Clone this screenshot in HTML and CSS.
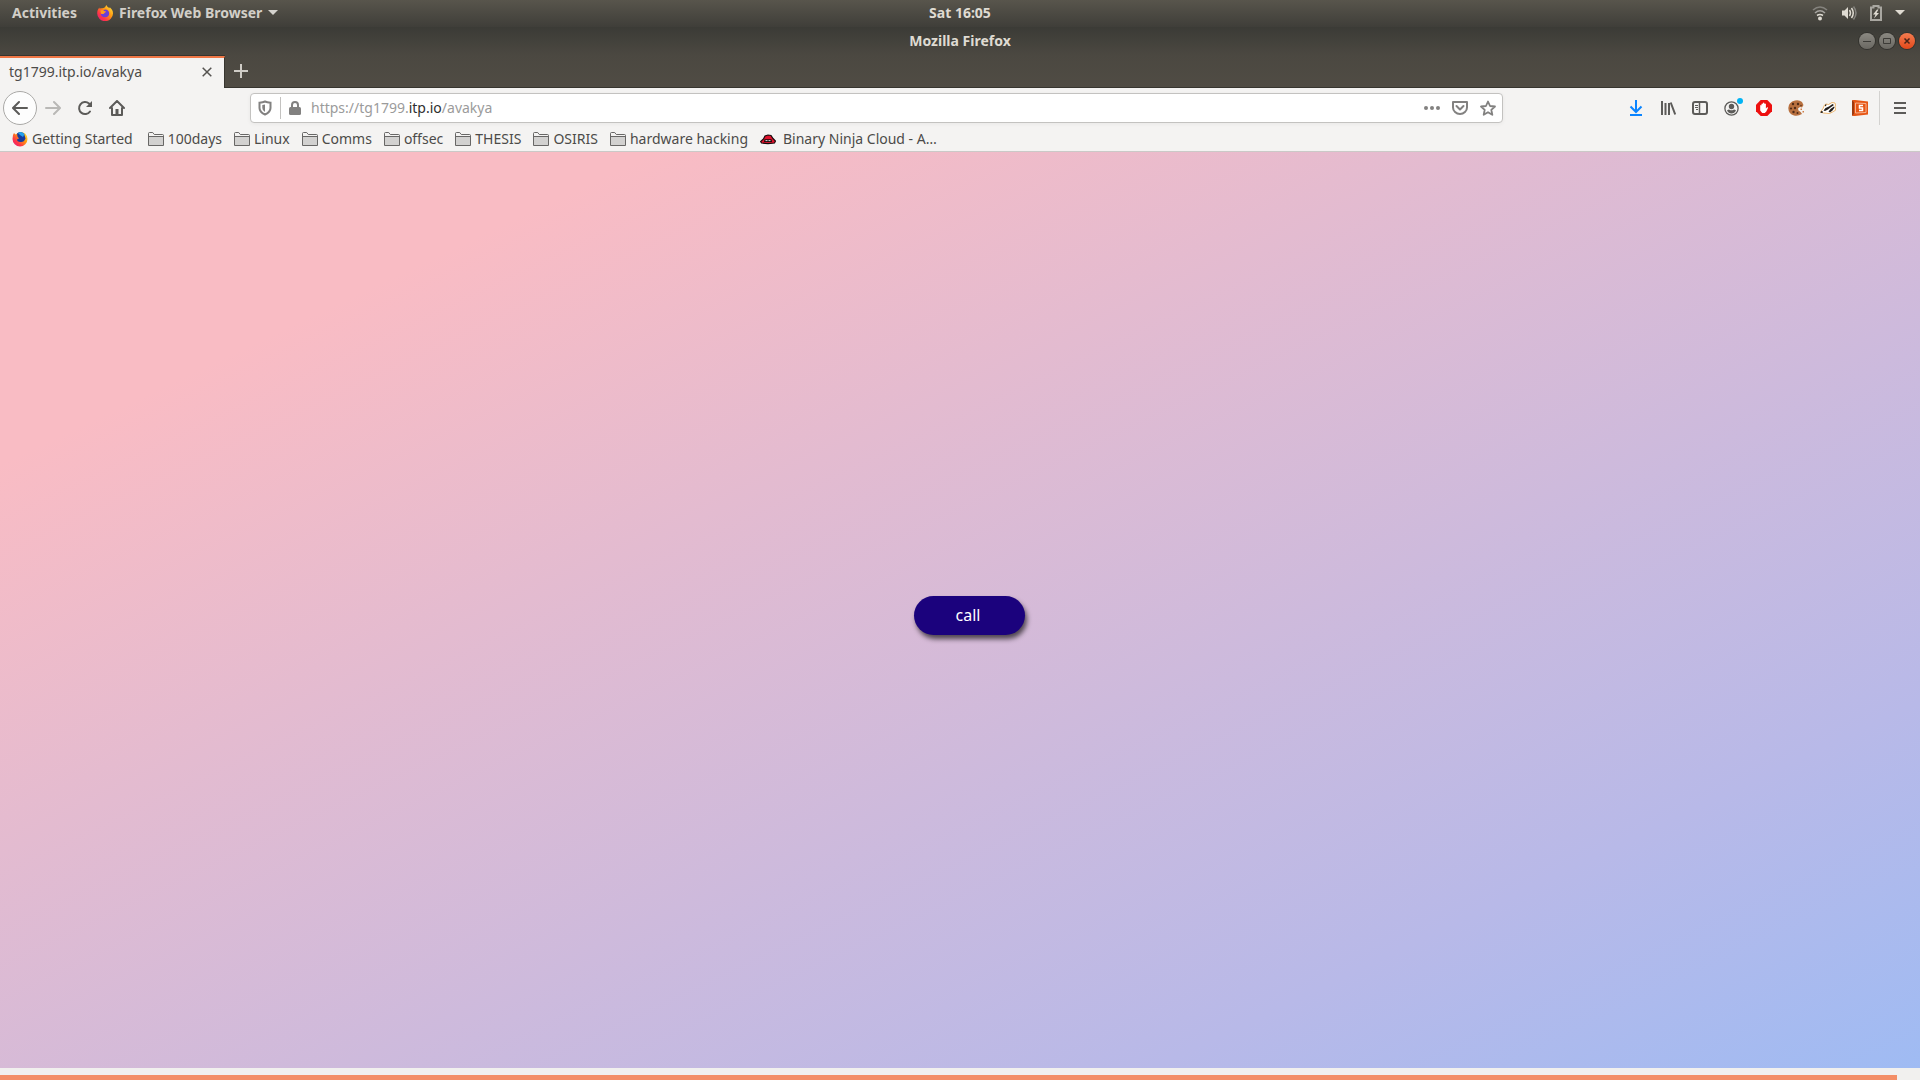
FILE: index.html
```html
<!DOCTYPE html>
<html lang="en">
<head>
<meta charset="utf-8">
<title>Mozilla Firefox</title>
<link rel="stylesheet" href="styles.css">
</head>
<body>
<svg class="defs" aria-hidden="true">
  <defs>
    <linearGradient id="flame" x1="1" y1="0" x2="0" y2="1">
      <stop offset="0" stop-color="#fff04a"/><stop offset=".4" stop-color="#ff980e"/><stop offset=".7" stop-color="#ff3647"/><stop offset="1" stop-color="#e31587"/>
    </linearGradient>
    <symbol id="folder" viewBox="0 0 16 16">
      <path d="M.5 14.500V2.500q0-1 1-1h3.200l1.600 2h8.200q1 0 1 1v10z" fill="#d2d1d0" stroke="#686766"/>
      <path d="M1 2h3.500l1.600 2H15v1.500H1z" fill="#f4f3f2"/><path d="M1 5.500h14" stroke="#686766"/>
    </symbol>
  </defs>
</svg>
<header class="topbar">
  <div class="topbar-side">
    <button class="menu">Activities</button>
    <button class="menu app-menu">
      <svg width="16" height="16" viewBox="0 0 16 16"><path d="M8 2.2 9.3 0c1 2 2 2 3 3.300l.5-1c1.600 1.400 3.200 3.200 3.200 6A7.800 7.700 0 0 1 .2 8.500C.2 6 1 4 2.400 2.600l.2 1.200C4 2.800 6 3.600 8 2.200z" fill="url(#flame)"/><path d="M8 4.500c3 0 4.200 2 4.200 4S10.600 12.300 8 12.300 3.800 10.500 3.800 8.500c1 .6 2 .4 3-.3-2.300-.8-1-2.700 1.200-3.700z" fill="#6b3fd6"/><path d="M3.500 5.500C5 4.500 6 5 7 6l2 .5c0 1-1.500 1-2 2-1 1-2.500.5-3 0z" fill="#ff9a1f"/></svg>
      <span>Firefox Web Browser</span>
      <svg width="10" height="6" viewBox="0 0 10 6"><path d="M0 0h10L5 5z" fill="#d5d3ce"/></svg>
    </button>
  </div>
  <time class="clock">Sat 16:05</time>
  <div class="topbar-side topbar-status">
    <svg width="16" height="16" viewBox="0 0 16 16" fill="none"><path d="M1 5q7-6 14 0" stroke="#85837e" stroke-width="1.600"/><path d="M3 8q5-4.500 10 0" stroke="#a5a39e" stroke-width="1.600"/><path d="M5 10.500q3-2 6 0" stroke="#dfdbd2" stroke-width="1.600"/><circle cx="8" cy="13.500" r="2" fill="#dfdbd2"/></svg>
    <svg width="16" height="16" viewBox="0 0 16 16" fill="none"><path d="M1 5.500h2.500L7 2v12l-3.500-3.500H1z" fill="#dfdbd2"/><path d="M8.500 5q2 3 0 6M10.500 3q3.500 5 0 10" stroke="#dfdbd2" stroke-width="1.500"/><path d="M12.500 1.500q5 6.500 0 13" stroke="#85837e" stroke-width="1.500"/></svg>
    <svg width="12" height="16" viewBox="0 0 12 16"><path d="M1 2.500h2.500V1h5v1.500H11V15H1z" fill="none" stroke="#a9a7a1" stroke-width="2"/><path d="M7 4.500 3 9.500h2.500L4 13.500l5-5.500H6.500l2-3.500z" fill="#dfdbd2"/></svg>
    <svg width="10" height="6" viewBox="0 0 10 6"><path d="M0 0h10L5 5z" fill="#dfdbd2"/></svg>
  </div>
</header>
<div class="titlebar">
  <span></span>
  <h1 class="title">Mozilla Firefox</h1>
  <div class="window-buttons">
    <button class="window-button" aria-label="Minimize"><svg width="16" height="16" viewBox="0 0 16 16"><path d="M4 8.500h8" stroke="#3c3b37"/></svg></button>
    <button class="window-button" aria-label="Maximize"><svg width="16" height="16" viewBox="0 0 16 16"><path d="M4.500 5.500h7v5h-7z" fill="none" stroke="#3c3b37"/></svg></button>
    <button class="window-button close" aria-label="Close"><svg width="16" height="16" viewBox="0 0 16 16"><path d="m5.500 5.500 5 5m0-5-5 5" stroke="#4a2418" stroke-width="1.500"/></svg></button>
  </div>
</div>
<div class="tabs">
  <div class="tab"><span>tg1799.itp.io/avakya</span>
    <button class="icon-button" aria-label="Close tab"><svg width="10" height="10" viewBox="0 0 10 10"><path d="m.7.7 8.600 8.600m0-8.600L.7 9.300" stroke="#555350" stroke-width="1.500"/></svg></button>
  </div>
  <button class="icon-button new-tab" aria-label="New tab"><svg width="14" height="14" viewBox="0 0 14 14"><path d="M7 0v14M0 7h14" stroke="#cfccc6" stroke-width="2"/></svg></button>
</div>
<nav class="toolbar">
  <div class="nav-buttons">
    <button class="icon-button back" aria-label="Back"><svg width="16" height="16" viewBox="0 0 16 16" fill="none" stroke="#5c5b59" stroke-width="2" stroke-linecap="round" stroke-linejoin="round"><path d="M15 8H1.500M7 2 1 8l6 6"/></svg></button>
    <button class="icon-button" aria-label="Forward"><svg width="16" height="16" viewBox="0 0 16 16" fill="none" stroke="#b9b8b6" stroke-width="2" stroke-linecap="round" stroke-linejoin="round"><path d="M1 8h13.500M9 2l6 6-6 6"/></svg></button>
    <button class="icon-button" aria-label="Reload"><svg width="16" height="16" viewBox="0 0 16 16" fill="none" stroke="#5c5b59" stroke-width="2" stroke-linecap="round"><path d="M13 11.500A6 6 0 1 1 12 3.500l1.500 1.500"/><path d="M15 1v6H9z" fill="#5c5b59" stroke="none"/></svg></button>
    <button class="icon-button" aria-label="Home"><svg width="16" height="16" viewBox="0 0 16 16" fill="none" stroke="#5c5b59" stroke-width="2" stroke-linecap="round" stroke-linejoin="round"><path d="m1 8 7-7 7 7M3 8v7h10V8"/><path d="M6.500 15V9h3v6z" fill="#5c5b59" stroke="none"/></svg></button>
  </div>
  <div class="urlbar">
    <svg width="14" height="16" viewBox="0 0 14 16"><path d="M7 1.500Q9 2.500 12.500 2.700V8q0 4-5.500 6.500Q1.500 12 1.500 8V2.700Q5 2.500 7 1.500z" fill="none" stroke="#828180" stroke-width="2"/><path d="M7 4.500V12Q4.300 10.500 4.300 8V5z" fill="#828180"/></svg>
    <span class="separator"></span>
    <svg width="12" height="16" viewBox="0 0 12 16"><rect y="7" width="12" height="8" rx="1.500" fill="#828180"/><path d="M3 8V5a3 3 0 0 1 6 0v3" fill="none" stroke="#828180" stroke-width="2"/></svg>
    <div class="address" role="textbox" aria-label="Address" contenteditable="true" spellcheck="false">https://tg1799.<span class="domain">itp.io</span>/avakya</div>
    <svg width="16" height="16" viewBox="0 0 16 16" fill="#828180"><circle cx="2" cy="8" r="2"/><circle cx="8" cy="8" r="2"/><circle cx="14" cy="8" r="2"/></svg>
    <svg width="16" height="16" viewBox="0 0 16 16" fill="none" stroke="#828180" stroke-width="2" stroke-linejoin="round"><path d="M1 2h14v5.500a7 6.500 0 0 1-14 0z"/><path d="m4.500 6 3.500 3.500L11.500 6" stroke-linecap="round"/></svg>
    <svg width="16" height="16" viewBox="0 0 16 16"><path d="m8 1.500 2 4.500 5 .5-3.700 3.300 1 5L8 12.200l-4.300 2.600 1-5L1 6.500 6 6z" fill="none" stroke="#828180" stroke-width="1.800" stroke-linejoin="round"/></svg>
  </div>
  <div class="tools">
    <button class="icon-button" aria-label="Downloads"><svg width="14" height="16" viewBox="0 0 14 16" fill="none" stroke="#0a84ff" stroke-width="2"><path d="M7 0v12M1.500 6.500 7 12l5.500-5.500M1 15h12" /></svg></button>
    <button class="icon-button" aria-label="Library"><svg width="16" height="16" viewBox="0 0 16 16" stroke="#5c5b59" stroke-width="2"><path d="M2 1v14M5.500 3v12M9 3v12M10.700 2.500l4.500 12"/></svg></button>
    <button class="icon-button" aria-label="Sidebars"><svg width="16" height="16" viewBox="0 0 16 16" fill="none" stroke="#5c5b59"><rect x="1" y="2" width="14" height="12" rx="2" stroke-width="2"/><path d="M7.500 2v12" stroke-width="1.500"/><path d="M3 5.500h3M3 7.500h3M4 9.500h2"/></svg></button>
    <button class="icon-button account" aria-label="Account"><svg width="16" height="16" viewBox="0 0 16 16"><circle cx="7.500" cy="8.500" r="6.600" fill="none" stroke="#5c5b59" stroke-width="1.300"/><circle cx="7.500" cy="6.500" r="2.700" fill="#5c5b59"/><path d="M3 10.500q1.500-1.300 2.500-.8 2 1 4 0 1-.5 2.500.8-1.500 3-4.500 3t-4.500-3z" fill="#5c5b59"/></svg><span class="badge"></span></button>
    <button class="icon-button" aria-label="Ad blocker"><svg width="16" height="16" viewBox="0 0 16 16"><path d="M4.700 0h6.600L16 4.700v6.600L11.300 16H4.700L0 11.300V4.700z" fill="#ed1010"/><path d="M4.200 5.500q.7-1 1.300 0V4q.7-1.200 1.400 0V3q.8-1 1.500 0v1q.8-1 1.500 0v4.500l1.200-1.300q1-.2 1 .6l-1.800 3.700-1.500 1.500H6.200l-2-2.500z" fill="#fff"/></svg></button>
    <button class="icon-button" aria-label="Cookies"><svg width="16" height="16" viewBox="0 0 16 16"><path d="M7 .5q4-1 7 1.500l1.500 3-1.500 2.500-2-.5-2 1.500.5 2 1.500 1 1 1 1 1.500Q10 16.500 6 15.500.5 14 .3 8 .5 2 7 .5z" fill="#b8703f"/><g fill="#4f2a18"><circle cx="5" cy="4" r="1.200"/><circle cx="10" cy="4" r="1.200"/><circle cx="3" cy="8.500" r="1.100"/><circle cx="7" cy="8" r="1.200"/><circle cx="5.500" cy="12" r="1.200"/><circle cx="9.500" cy="13" r="1"/><circle cx="13" cy="5.500" r=".7"/></g><path d="M12.500 8.500h1.500v1.500h-1.500zM14.500 11H16v1.500h-1.500z" fill="#d07e48"/></svg></button>
    <button class="icon-button" aria-label="Privacy Badger"><svg width="16" height="16" viewBox="0 0 16 16"><path d="M.5 12 3 8.500 4.500 5 6 4l2.500.5L12 2.500l3 .5.500 2-.5 2 .8 3-3.300 2-3 1.500-6-.5z" fill="#fff" stroke="#e9a54c" stroke-width=".8"/><path d="M.3 12.800 1.300 11l1.700.5-.5 1.500zM3.500 10.500 5.500 8 9 6.500 12.500 4l1.500 1-3.500 2.500L8 9.500l-3 1.500zM8.500 11.500l2-2.500 3.500-2.500.5 1-2 3-2.500 2zM5 4.500l2 .3L5 6.500z" fill="#211d1b"/></svg></button>
    <button class="icon-button" aria-label="S5 extension"><svg width="16" height="16" viewBox="0 0 16 16"><path d="M0 0 3 2v12l-3 2z" fill="#9c3a10"/><path d="M0 0h3l13 1.500v13L3 16H0l2-2V2z" fill="#e65514"/><path d="M3.500 3 14 3.500v9L3.500 13z" fill="none" stroke="#f7b391"/><path d="M11 5.500H7.500V8h3v2.500H7" fill="none" stroke="#fff" stroke-width="1.500"/></svg></button>
  </div>
  <button class="icon-button app-button" aria-label="Open menu"><svg width="12" height="14" viewBox="0 0 12 14"><path d="M0 2h12M0 7h12M0 12h12" stroke="#5c5b59" stroke-width="2"/></svg></button>
</nav>
<nav class="bookmarks" aria-label="Bookmarks">
  <a href="#" class="home-link"><svg width="16" height="16" viewBox="0 0 16 16"><path d="M8 1q7 0 7.500 7A7.500 7.500 0 0 1 .5 8L1 4l1-2 1.500 1.500z" fill="url(#flame)"/><path d="M5 2.500Q8-.5 12 2.500l1.500 5Q12 11.500 8.500 11T5 8.500l2-1-1.500-2z" fill="#173b9c"/><path d="M6 2q3-2.500 6.500 1L11 6 8 4z" fill="#24a1ee"/></svg>Getting Started</a>
  <a href="#"><svg width="16" height="16"><use href="#folder"/></svg>100days</a>
  <a href="#"><svg width="16" height="16"><use href="#folder"/></svg>Linux</a>
  <a href="#"><svg width="16" height="16"><use href="#folder"/></svg>Comms</a>
  <a href="#"><svg width="16" height="16"><use href="#folder"/></svg>offsec</a>
  <a href="#"><svg width="16" height="16"><use href="#folder"/></svg>THESIS</a>
  <a href="#"><svg width="16" height="16"><use href="#folder"/></svg>OSIRIS</a>
  <a href="#"><svg width="16" height="16"><use href="#folder"/></svg>hardware hacking</a>
  <a href="#" class="ninja"><svg width="16" height="16" viewBox="0 0 16 16"><path d="M.7 10.500 3.500 8 5 5l3-1 3 .5 2 3 2.500 2.500-1 2-6.500.7-6.500-.7z" fill="#e0122c" stroke="#17090b" stroke-width="1.200"/><path d="M4.500 8.200h7l.5 2.800H4z" fill="#17090b"/><path d="M5.500 9.600h2m1 0h2" stroke="#ddd"/></svg>Binary Ninja Cloud - A…</a>
</nav>
<main class="page"><button class="call">call</button></main>
<footer class="bottom"><div class="progress"></div></footer>
</body>
</html>
```
FILE: styles.css
```css
* { box-sizing: border-box; }
body {
  margin: 0;
  min-height: 100vh;
  display: flex;
  flex-direction: column;
  background: #f4f3f2;
  color: #4c4b49;
  font: 14px/20px "Noto Sans", sans-serif;
}
svg { display: block; flex: none; }
button { padding: 0; border: 0; background: none; color: inherit; font: inherit; }
.defs { position: absolute; width: 0; height: 0; }

.topbar, .titlebar {
  display: grid;
  grid-template-columns: 1fr auto 1fr;
  align-items: center;
  color: #dfdbd2;
  font-weight: 700;
}
.topbar { height: 27px; padding: 0 12px 1px; background: linear-gradient(#58554c, #3f3e39); }
.topbar-side { display: flex; align-items: center; gap: 20px; }
.topbar-status { justify-content: flex-end; gap: 13px; padding-right: 3px; }
.menu { color: #d2cfc8; }
.app-menu { display: flex; align-items: center; gap: 6px; }
.titlebar { height: 28px; padding: 0 5px; background: linear-gradient(#3b3b36, #4b4841); }
.title { margin: 0; font-size: 14px; }
.window-buttons { display: flex; justify-content: flex-end; gap: 4px; }
.window-button {
  border-radius: 50%;
  background: linear-gradient(#8b8982, #6a6862);
  box-shadow: 0 0 0 1px #33322e;
}
.window-button.close { background: linear-gradient(#f47c50, #e2481a); }

.tabs { display: flex; height: 33px; background: linear-gradient(#4b4841, #504c44); border-bottom: 1px solid #37352f; }
.tab {
  display: flex;
  align-items: center;
  justify-content: space-between;
  width: 225px;
  height: 32px;
  margin-top: 1px;
  padding: 0 12px 2px 9px;
  background: #f4f3f2;
  border-top: 2px solid #f07746;
  border-right: 1px solid #37352f;
  box-shadow: 0 -1px #37352f;
}
.icon-button { display: flex; align-items: center; justify-content: center; }
.new-tab { width: 32px; }

.toolbar { display: flex; align-items: center; height: 40px; padding-left: 3px; }
.nav-buttons { display: flex; align-items: center; width: 247px; }
.nav-buttons .icon-button { width: 32px; height: 32px; }
.nav-buttons .back { width: 34px; height: 34px; border: 1px solid #aaa9a7; border-radius: 50%; background: #fdfdfd; }
.urlbar {
  display: flex;
  align-items: center;
  flex: 1;
  gap: 12px;
  height: 30px;
  padding: 0 6px 0 7px;
  border: 1px solid #c3c2c0;
  border-radius: 4px;
  background: #fff;
  box-shadow: 0 1px 4px #0000000d;
}
.urlbar .separator { width: 1px; height: 22px; margin: 0 -4px; background: #c3c2c0; }
.address { flex: 1; margin-left: -2px; color: #9b9b9b; white-space: nowrap; }
.domain { color: #2e2e2e; }
.tools { display: flex; justify-content: flex-end; width: 376px; padding-right: 3px; }
.tools .icon-button { width: 32px; height: 32px; }
.account { position: relative; }
.badge { position: absolute; top: 6px; right: 5px; width: 6px; height: 6px; border-radius: 50%; background: #00b3f4; }
.app-button { width: 41px; height: 34px; border-left: 1px solid #d3d2d0; }

.bookmarks { display: flex; align-items: center; gap: 12px; height: 24px; padding: 0 12px 2px; border-bottom: 1px solid #cbc9c7; white-space: nowrap; }
.bookmarks a { display: flex; align-items: center; gap: 4px; color: inherit; text-decoration: none; }
.bookmarks .home-link { padding-right: 3px; }
.bookmarks .ninja { gap: 7px; }

.page {
  flex: 1;
  display: flex;
  align-items: center;
  justify-content: center;
  padding: 11px 0 0 19px;
  background: linear-gradient(to bottom right, #f9bcc4 17%, #b8b9e8 80%, #9fbbf3);
}
.call {
  width: 111px;
  height: 39px;
  padding: 0 3px 2px 0;
  border-radius: 20px;
  background: #1b027d;
  box-shadow: 2px 4px 5px #000000a0;
  color: #fff;
  font-size: 16px;
}
.bottom { display: flex; align-items: flex-end; height: 12px; padding-right: 23px; background: #f1f0ee; }
.progress { flex: 1; height: 5px; background: #f38e66; }
```
